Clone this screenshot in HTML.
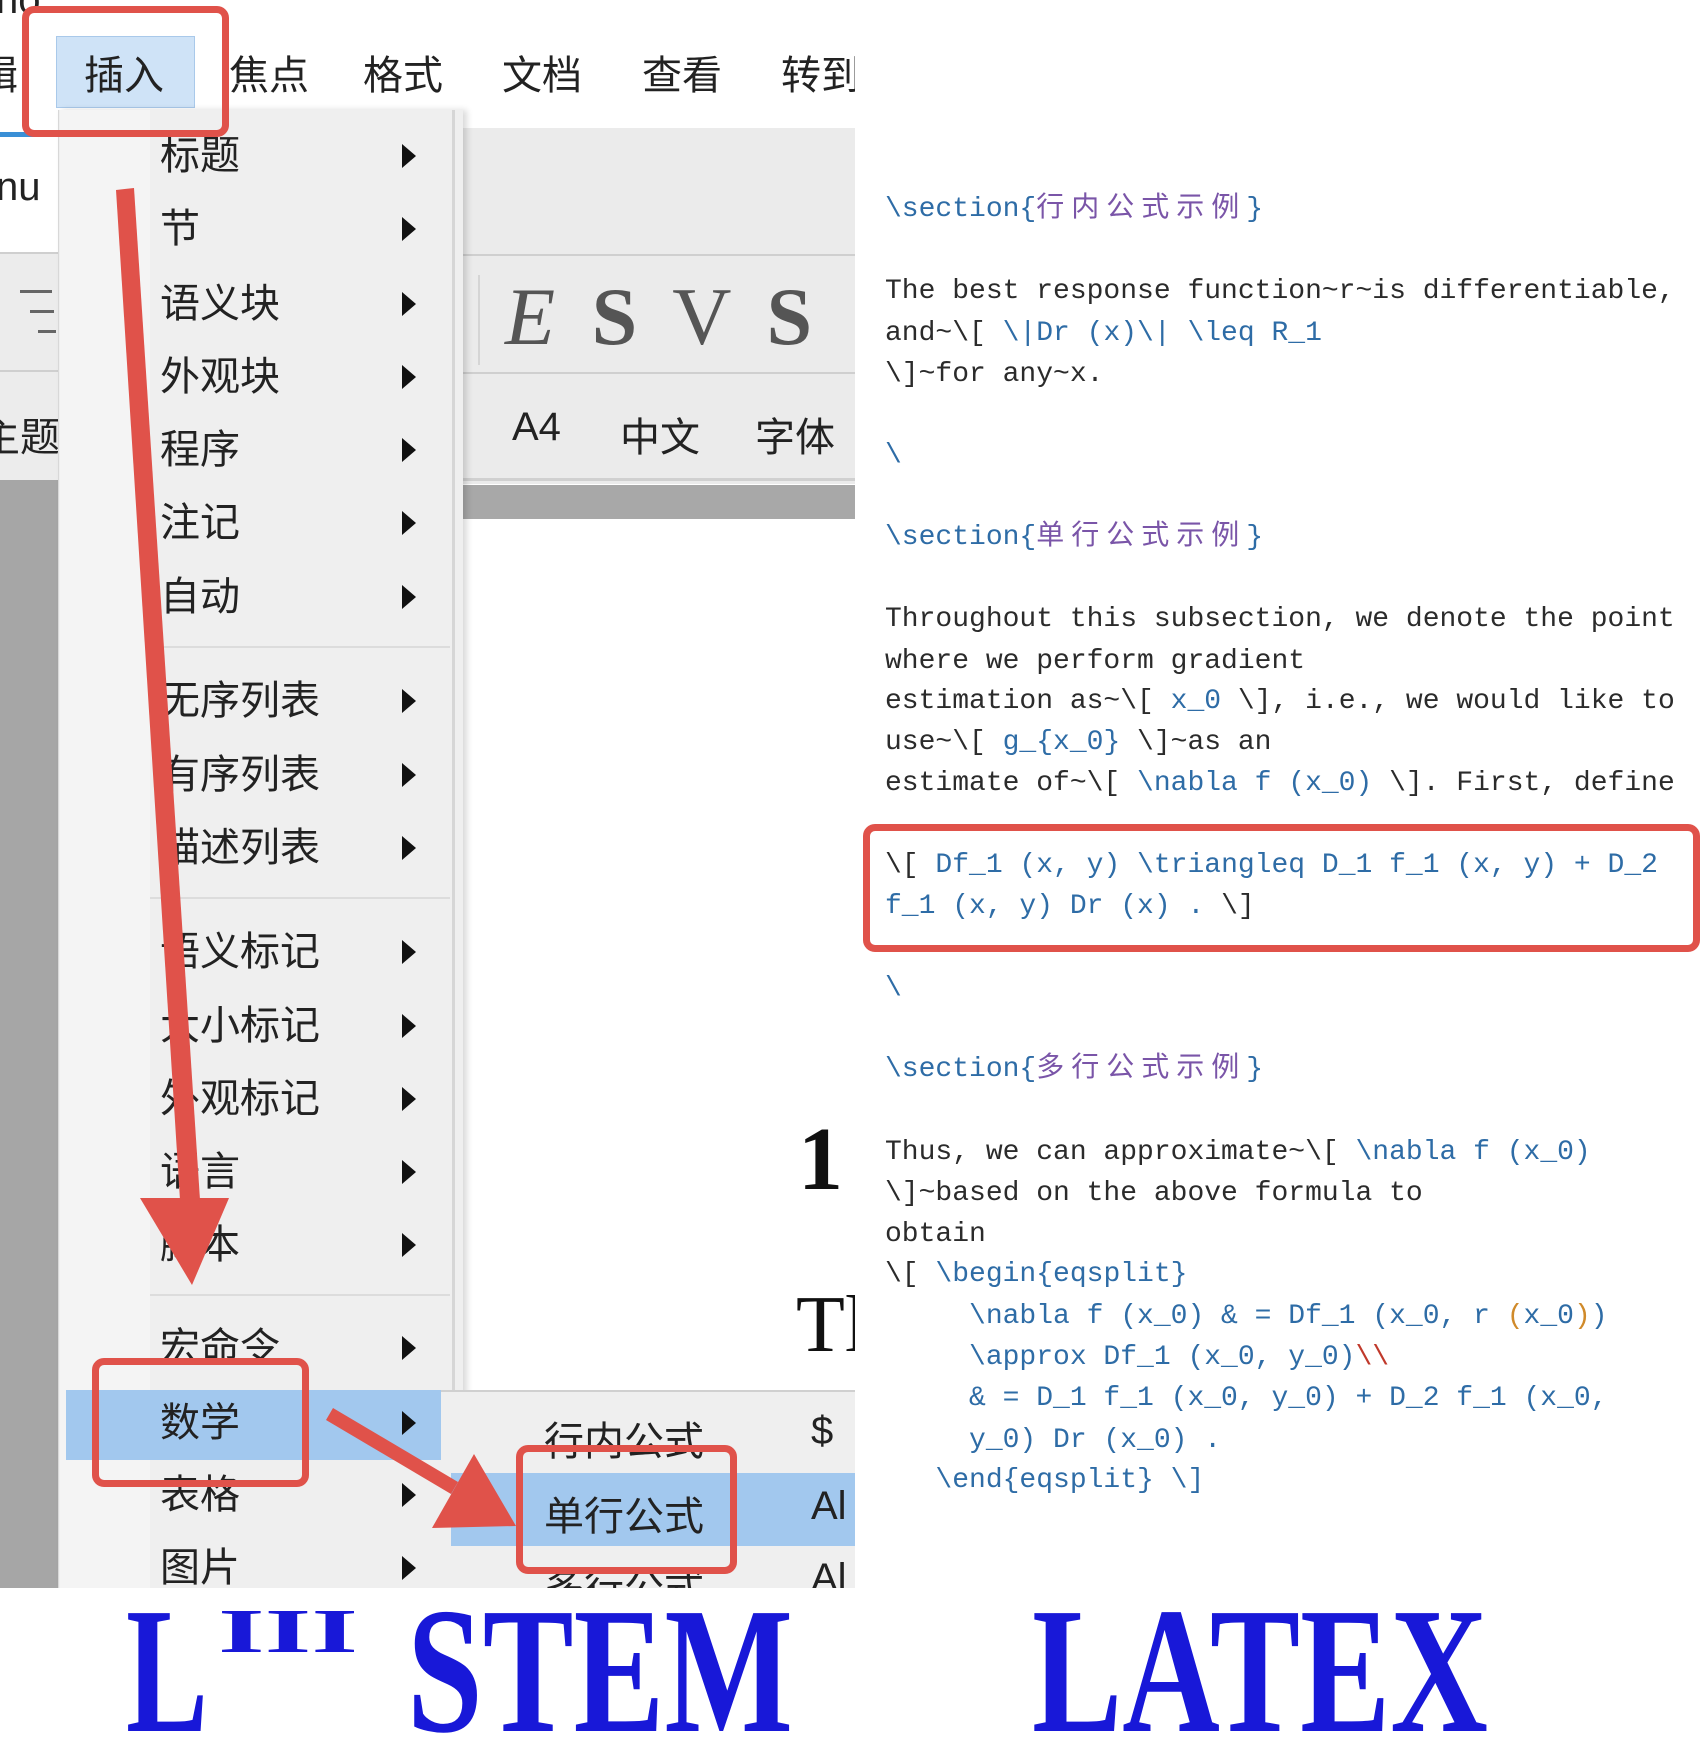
<!DOCTYPE html>
<html><head><meta charset="utf-8"><style>
*{margin:0;padding:0;box-sizing:border-box}
body{width:1707px;height:1748px;background:#fff;position:relative;overflow:hidden;font-family:"Liberation Sans","Noto Sans CJK SC",sans-serif}
.a{position:absolute}
.cj{font-family:"Liberation Sans","Noto Sans CJK SC",sans-serif;color:#222;white-space:nowrap}
.mi{position:absolute;left:160px;font-size:40px;line-height:50px;color:#222}
.ar{position:absolute;left:402px;width:0;height:0;border-top:12px solid transparent;border-bottom:12px solid transparent;border-left:14px solid #111}
.sep{position:absolute;left:150px;width:300px;height:2px;background:#dcdcdc}
.code{position:absolute;left:885px;font-family:"Liberation Mono","Noto Sans CJK SC",monospace;font-size:28px;line-height:41px;height:41px;white-space:pre;color:#2b2b2b}
.b{color:#2e6ca6}.p{color:#7a55a8;letter-spacing:7px}.r{color:#c0392b}.o{color:#d08a2a}
.box{position:absolute;border:7px solid #e0524a;border-radius:12px}
</style></head><body>
<div class="a" style="left:0;top:0;width:855px;height:1588px;background:#fff;overflow:hidden">
  <div class="a cj" style="left:-4px;top:-22px;font-size:40px">no</div>
  <div class="a" style="left:56px;top:36px;width:139px;height:72px;background:#cfe3f7;border:1px solid #a9c9ea"></div>
  <div class="a cj" style="left:-22px;top:43px;font-size:40px">辑</div>
  <div class="a cj" style="left:84px;top:43px;font-size:40px">插入</div>
  <div class="a cj" style="left:229px;top:43px;font-size:40px">焦点</div>
  <div class="a cj" style="left:363px;top:43px;font-size:40px">格式</div>
  <div class="a cj" style="left:502px;top:43px;font-size:40px">文档</div>
  <div class="a cj" style="left:642px;top:43px;font-size:40px">查看</div>
  <div class="a cj" style="left:781px;top:43px;font-size:40px">转到</div>
  <div class="a" style="left:0;top:132px;width:60px;height:5px;background:#3a8fd6"></div>
  <div class="a cj" style="left:-4px;top:165px;font-size:40px">nu</div>
  <div class="a" style="left:0;top:252px;width:60px;height:228px;background:#ececec;border-top:2px solid #cfcfcf"></div>
  <div class="a" style="left:20px;top:290px;width:32px;height:3px;background:#666"></div>
  <div class="a" style="left:30px;top:310px;width:24px;height:3px;background:#666"></div>
  <div class="a" style="left:38px;top:330px;width:18px;height:3px;background:#666"></div>
  <div class="a" style="left:0;top:370px;width:60px;height:2px;background:#cfcfcf"></div>
  <div class="a cj" style="left:-20px;top:405px;font-size:40px">主题</div>
  <div class="a" style="left:0;top:480px;width:60px;height:1108px;background:#a6a6a6"></div>
  <div class="a" style="left:463px;top:128px;width:392px;height:126px;background:#ebebeb"></div>
  <div class="a" style="left:463px;top:254px;width:392px;height:2px;background:#cfcfcf"></div>
  <div class="a" style="left:463px;top:256px;width:392px;height:116px;background:#ebebeb"></div>
  <div class="a" style="left:478px;top:275px;width:2px;height:90px;background:#d5d5d5"></div>
  <div class="a" style="left:505px;top:270px;font-family:'Liberation Serif',serif;font-size:82px;color:#555;white-space:nowrap;letter-spacing:8px"><i>E</i> <b>S</b> V <b>S</b></div>
  <div class="a" style="left:463px;top:372px;width:392px;height:2px;background:#cfcfcf"></div>
  <div class="a" style="left:463px;top:374px;width:392px;height:110px;background:#ebebeb"></div>
  <div class="a cj" style="left:512px;top:405px;font-size:40px">A4</div>
  <div class="a cj" style="left:620px;top:405px;font-size:40px">中文</div>
  <div class="a cj" style="left:755px;top:405px;font-size:40px">字体</div>
  <div class="a" style="left:463px;top:478px;width:392px;height:3px;background:#d0d0d0"></div>
  <div class="a" style="left:463px;top:485px;width:392px;height:34px;background:#a8a8a8"></div>
  <div class="a" style="left:798px;top:1108px;font-family:'Liberation Serif',serif;font-size:90px;font-weight:bold;color:#111">1</div>
  <div class="a" style="left:796px;top:1280px;font-family:'Liberation Serif',serif;font-size:80px;color:#111">Tl</div>
  <div class="a" style="left:58px;top:110px;width:405px;height:1478px;background:#efefef;border-left:1px solid #d8d8d8;box-shadow:4px 0 6px rgba(0,0,0,.15)"></div>
  <div class="a" style="left:60px;top:110px;width:90px;height:1478px;background:#f4f4f4"></div>
  <div class="a" style="left:452px;top:110px;width:3px;height:1478px;background:#d6d6d6"></div>
  <div class="a" style="left:66px;top:1390px;width:375px;height:70px;background:#a2c8ee"></div>
  <div class="mi" style="top:131px">标题</div><div class="ar" style="top:144px"></div>
  <div class="mi" style="top:204px">节</div><div class="ar" style="top:217px"></div>
  <div class="mi" style="top:279px">语义块</div><div class="ar" style="top:292px"></div>
  <div class="mi" style="top:352px">外观块</div><div class="ar" style="top:365px"></div>
  <div class="mi" style="top:425px">程序</div><div class="ar" style="top:438px"></div>
  <div class="mi" style="top:498px">注记</div><div class="ar" style="top:511px"></div>
  <div class="mi" style="top:572px">自动</div><div class="ar" style="top:585px"></div>
  <div class="sep" style="top:646px"></div>
  <div class="mi" style="top:676px">无序列表</div><div class="ar" style="top:689px"></div>
  <div class="mi" style="top:750px">有序列表</div><div class="ar" style="top:763px"></div>
  <div class="mi" style="top:823px">描述列表</div><div class="ar" style="top:836px"></div>
  <div class="sep" style="top:897px"></div>
  <div class="mi" style="top:927px">语义标记</div><div class="ar" style="top:940px"></div>
  <div class="mi" style="top:1001px">大小标记</div><div class="ar" style="top:1014px"></div>
  <div class="mi" style="top:1074px">外观标记</div><div class="ar" style="top:1087px"></div>
  <div class="mi" style="top:1147px">语言</div><div class="ar" style="top:1160px"></div>
  <div class="mi" style="top:1220px">脚本</div><div class="ar" style="top:1233px"></div>
  <div class="sep" style="top:1294px"></div>
  <div class="mi" style="top:1323px">宏命令</div><div class="ar" style="top:1336px"></div>
  <div class="mi" style="top:1398px">数学</div><div class="ar" style="top:1411px"></div>
  <div class="mi" style="top:1470px">表格</div><div class="ar" style="top:1483px"></div>
  <div class="mi" style="top:1543px">图片</div><div class="ar" style="top:1556px"></div>
  <div class="a" style="left:441px;top:1390px;width:414px;height:198px;background:#efefef;border-top:2px solid #d0d0d0"></div>
  <div class="a" style="left:451px;top:1473px;width:404px;height:73px;background:#a2c8ee"></div>
  <div class="a cj" style="left:544px;top:1409px;font-size:40px">行内公式</div>
  <div class="a cj" style="left:811px;top:1409px;font-size:40px">$</div>
  <div class="a cj" style="left:544px;top:1484px;font-size:40px">单行公式</div>
  <div class="a cj" style="left:811px;top:1484px;font-size:40px">Al</div>
  <div class="a cj" style="left:544px;top:1556px;font-size:40px">多行公式</div>
  <div class="a cj" style="left:811px;top:1556px;font-size:40px">Al</div>
  <div class="box" style="left:22px;top:6px;width:207px;height:131px"></div>
  <div class="box" style="left:92px;top:1358px;width:217px;height:129px"></div>
  <div class="box" style="left:516px;top:1445px;width:221px;height:129px"></div>
  <svg class="a" style="left:0;top:0" width="855" height="1588">
    <polygon points="116,190 134,188 200,1200 180,1200" fill="#e0524a"/>
    <polygon points="140,1198 229,1198 192,1285" fill="#e0524a"/>
    <polygon points="326,1420 333,1408 458,1482 451,1494" fill="#e0524a"/>
    <polygon points="432,1528 474,1454 516,1526" fill="#e0524a"/>
  </svg>
</div>
<div class="code" style="top:189px"><span class="b">\section{</span><span class="p">行内公式示例</span><span class="b">}</span></div>
<div class="code" style="top:271px">The best response function~r~is differentiable,</div>
<div class="code" style="top:313px">and~\[ <span class="b">\|Dr (x)\| \leq R_1</span></div>
<div class="code" style="top:354px">\]~for any~x.</div>
<div class="code b" style="top:435px">\</div>
<div class="code" style="top:517px"><span class="b">\section{</span><span class="p">单行公式示例</span><span class="b">}</span></div>
<div class="code" style="top:599px">Throughout this subsection, we denote the point</div>
<div class="code" style="top:641px">where we perform gradient</div>
<div class="code" style="top:681px">estimation as~\[ <span class="b">x_0</span> \], i.e., we would like to</div>
<div class="code" style="top:722px">use~\[ <span class="b">g_{x_0}</span> \]~as an</div>
<div class="code" style="top:763px">estimate of~\[ <span class="b">\nabla f (x_0)</span> \]. First, define</div>
<div class="box" style="left:863px;top:824px;width:837px;height:128px"></div>
<div class="code" style="top:845px">\[ <span class="b">Df_1 (x, y) \triangleq D_1 f_1 (x, y) + D_2</span></div>
<div class="code" style="top:886px"><span class="b">f_1 (x, y) Dr (x) .</span> \]</div>
<div class="code b" style="top:968px">\</div>
<div class="code" style="top:1049px"><span class="b">\section{</span><span class="p">多行公式示例</span><span class="b">}</span></div>
<div class="code" style="top:1132px">Thus, we can approximate~\[ <span class="b">\nabla f (x_0)</span></div>
<div class="code" style="top:1173px">\]~based on the above formula to</div>
<div class="code" style="top:1214px">obtain</div>
<div class="code" style="top:1254px">\[ <span class="b">\begin{eqsplit}</span></div>
<div class="code b" style="top:1296px">     \nabla f (x_0) &amp; = Df_1 (x_0, r <span class="o">(</span>x_0<span class="o">)</span>)</div>
<div class="code b" style="top:1337px">     \approx Df_1 (x_0, y_0)<span class="r">\\</span></div>
<div class="code b" style="top:1378px">     &amp; = D_1 f_1 (x_0, y_0) + D_2 f_1 (x_0,</div>
<div class="code b" style="top:1420px">     y_0) Dr (x_0) .</div>
<div class="code b" style="top:1460px">   \end{eqsplit} \]</div>
<svg class="a" style="left:0;top:1588px" width="1707" height="160">
  <g font-family="Liberation Serif, serif" font-weight="bold" fill="#1818d8">
    <text x="126" y="143" font-size="180" textLength="82" lengthAdjust="spacingAndGlyphs">L</text>
    <text x="218" y="64" font-size="62" textLength="140" lengthAdjust="spacingAndGlyphs">III</text>
    <text x="407" y="143" font-size="180" textLength="386" lengthAdjust="spacingAndGlyphs">STEM</text>
    <text x="1032" y="143" font-size="180" textLength="456" lengthAdjust="spacingAndGlyphs">LATEX</text>
  </g>
</svg>
</body></html>
